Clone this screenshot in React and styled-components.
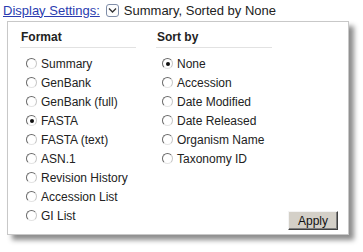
import React, { useState } from "react";
import styled, { createGlobalStyle } from "styled-components";

const Global = createGlobalStyle`
    body {
        margin: 0;
        background: #fff;
        font-family: Arial, "Liberation Sans", sans-serif;
        color: #222;
    }
`;

const Page = styled.div`
    width: 363px;
    height: 252px;
    overflow: hidden;
`;

const Header = styled.div`
    display: flex;
    align-items: center;
    height: 20px;
    padding-left: 3px;
    font-size: 13px;
    white-space: nowrap;
`;

const SettingsLink = styled.a`
    color: #2a3cb0;
    text-decoration: underline;
    cursor: pointer;
`;

const Toggle = styled.span`
    display: inline-flex;
    align-items: center;
    justify-content: center;
    width: 11px;
    height: 11px;
    margin: 0 5px 0 6px;
    border: 1px solid #7f8da8;
    border-radius: 3px;
    background: #fdfdfd;
`;

const Summary = styled.span`
    color: #222;
`;

const Panel = styled.div`
    margin: 1px 0 0 7px;
    width: 342px;
    height: 214px;
    border: 1px solid #c8c8c8;
    background: #fff;
    box-shadow: 5px 5px 5px rgba(0, 0, 0, 0.45);
    box-sizing: border-box;
    padding: 7px 0 0 12px;
    display: flex;
    position: relative;
`;

const Column = styled.div`
    width: ${({ w }) => w}px;
    display: flex;
    flex-direction: column;
`;

const Heading = styled.div`
    width: 115px;
    font-size: 12px;
    font-weight: bold;
    line-height: 14px;
    padding: 1px 0 3px 1px;
    border-bottom: 1px solid #e2e2e2;
    margin-bottom: 6px;
`;

const Row = styled.label`
    display: flex;
    align-items: center;
    height: 19px;
    padding-left: 6px;
    font-size: 12px;
    color: #222;
    cursor: pointer;
`;

const Radio = styled.span`
    position: relative;
    width: 9px;
    height: 9px;
    border-radius: 50%;
    border: 1px solid;
    border-color: #6a6a6a #c6c6c6 #e4e4e4 #6a6a6a;
    background: #fff;
    margin-right: 4px;
    flex: none;
    &::after {
        content: "";
        display: ${({ checked }) => (checked ? "block" : "none")};
        position: absolute;
        left: 3px;
        top: 3px;
        width: 4px;
        height: 4px;
        border-radius: 50%;
        background: #111;
    }
`;

const ApplyButton = styled.button`
    position: absolute;
    right: 10px;
    bottom: 4px;
    width: 50px;
    height: 19px;
    padding: 0;
    font-family: Arial, "Liberation Sans", sans-serif;
    font-size: 12px;
    color: #111;
    background: #d4d0c8;
    border: 1px solid;
    border-color: #f4f4f4 #404040 #404040 #f4f4f4;
    box-shadow: inset -1px -1px 0 #808080;
`;

const formats = [
    "Summary",
    "GenBank",
    "GenBank (full)",
    "FASTA",
    "FASTA (text)",
    "ASN.1",
    "Revision History",
    "Accession List",
    "GI List",
];

const sorts = [
    "None",
    "Accession",
    "Date Modified",
    "Date Released",
    "Organism Name",
    "Taxonomy ID",
];

const App = () => {
    const [format, setFormat] = useState("FASTA");
    const [sort, setSort] = useState("None");

    return (
        <Page>
            <Global />
            <Header>
                <SettingsLink>Display Settings:</SettingsLink>
                <Toggle>
                    <svg width="9" height="7" viewBox="0 0 9 7">
                        <path d="M1 1.5 L4.5 5 L8 1.5" fill="none" stroke="#333" strokeWidth="1.3" />
                    </svg>
                </Toggle>
                <Summary>Summary, Sorted by None</Summary>
            </Header>
            <Panel>
                <Column w={136}>
                    <Heading>Format</Heading>
                    {formats.map((f) => (
                        <Row key={f} onClick={() => setFormat(f)}>
                            <Radio checked={format === f} />
                            {f}
                        </Row>
                    ))}
                </Column>
                <Column w={150}>
                    <Heading>Sort by</Heading>
                    {sorts.map((s) => (
                        <Row key={s} onClick={() => setSort(s)}>
                            <Radio checked={sort === s} />
                            {s}
                        </Row>
                    ))}
                </Column>
                <ApplyButton>Apply</ApplyButton>
            </Panel>
        </Page>
    );
};

export default App;
